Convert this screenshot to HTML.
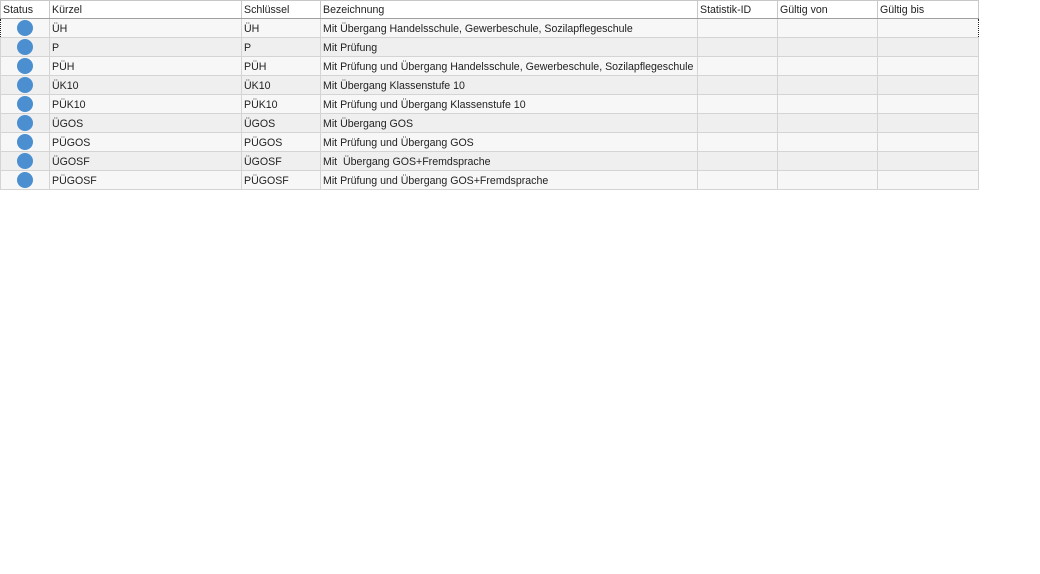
<!DOCTYPE html>
<html><head><meta charset="utf-8"><style>
body{margin:0;width:1040px;height:574px;background:#fff;font-family:"Liberation Sans","DejaVu Sans",sans-serif;font-size:10.6px;color:#222;position:relative;overflow:hidden}
table{border-collapse:collapse;position:absolute;left:0;top:0;table-layout:fixed;width:979px}
td,th{border:1px solid #d4d4d4;padding:1px 0 0 2px;height:17px;white-space:nowrap;overflow:hidden;text-align:left;font-weight:normal}
th{border-color:#c8c8c8;border-bottom:1px solid #a0a0a0;background:#fff;height:16px}
tr.a td{background:#f7f7f7}
tr.b td{background:#efefef}
tr.sel td{border-top:1px dotted #222;border-bottom:1px dotted #222}
tr.sel td:first-child{border-left:1px dotted #222}
tr.sel td:last-child{border-right:1px dotted #222}
.dot{display:block;width:16px;height:16px;border-radius:50%;background:#4b8fd1;margin:0 auto 0 16px}
td:first-child{padding:0}
</style></head><body>
<table>
<colgroup><col style="width:49px"><col style="width:192px"><col style="width:79px"><col style="width:377px"><col style="width:80px"><col style="width:100px"><col style="width:101px"></colgroup>
<tr><th>Status</th><th>Kürzel</th><th>Schlüssel</th><th>Bezeichnung</th><th>Statistik-ID</th><th>Gültig von</th><th>Gültig bis</th></tr>
<tr class="a sel"><td><span class="dot"></span></td><td>ÜH</td><td>ÜH</td><td>Mit Übergang Handelsschule, Gewerbeschule, Sozilapflegeschule</td><td></td><td></td><td></td></tr>
<tr class="b"><td><span class="dot"></span></td><td>P</td><td>P</td><td>Mit Prüfung</td><td></td><td></td><td></td></tr>
<tr class="a"><td><span class="dot"></span></td><td>PÜH</td><td>PÜH</td><td>Mit Prüfung und Übergang Handelsschule, Gewerbeschule, Sozilapflegeschule</td><td></td><td></td><td></td></tr>
<tr class="b"><td><span class="dot"></span></td><td>ÜK10</td><td>ÜK10</td><td>Mit Übergang Klassenstufe 10</td><td></td><td></td><td></td></tr>
<tr class="a"><td><span class="dot"></span></td><td>PÜK10</td><td>PÜK10</td><td>Mit Prüfung und Übergang Klassenstufe 10</td><td></td><td></td><td></td></tr>
<tr class="b"><td><span class="dot"></span></td><td>ÜGOS</td><td>ÜGOS</td><td>Mit Übergang GOS</td><td></td><td></td><td></td></tr>
<tr class="a"><td><span class="dot"></span></td><td>PÜGOS</td><td>PÜGOS</td><td>Mit Prüfung und Übergang GOS</td><td></td><td></td><td></td></tr>
<tr class="b"><td><span class="dot"></span></td><td>ÜGOSF</td><td>ÜGOSF</td><td>Mit&nbsp; Übergang GOS+Fremdsprache</td><td></td><td></td><td></td></tr>
<tr class="a"><td><span class="dot"></span></td><td>PÜGOSF</td><td>PÜGOSF</td><td>Mit Prüfung und Übergang GOS+Fremdsprache</td><td></td><td></td><td></td></tr>
</table>
</body></html>
